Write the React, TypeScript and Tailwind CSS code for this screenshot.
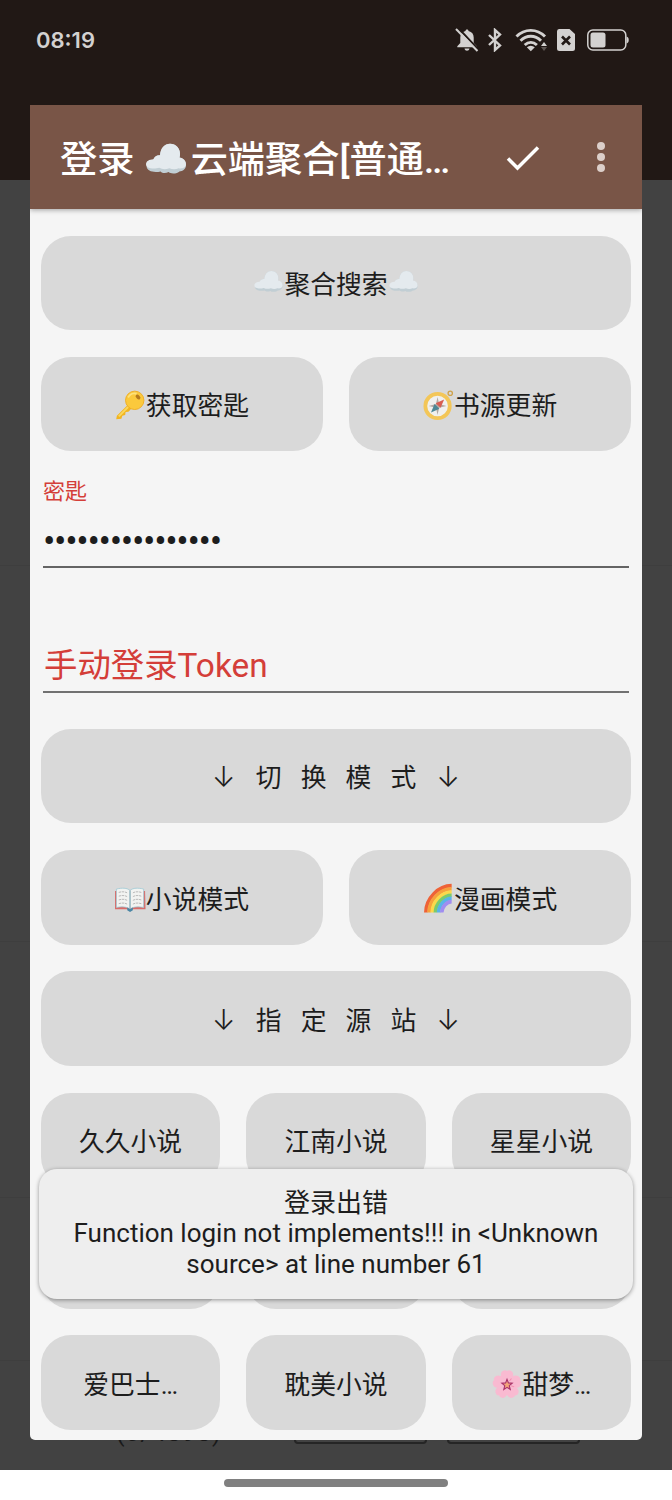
import type { ReactNode } from 'react'

type EmojiName = 'cloud' | 'key' | 'compass' | 'book' | 'rainbow' | 'blossom'

interface Action {
  label: ReactNode
  before?: EmojiName
  after?: EmojiName
}

const SOURCES: Action[] = [
  { label: '久久小说' },
  { label: '江南小说' },
  { label: '星星小说' },
  { label: '' },
  { label: '' },
  { label: '' },
  { label: '爱巴士…' },
  { label: '耽美小说' },
  { label: '甜梦…', before: 'blossom' },
]

const PETALS = [0, 72, 144, 216, 288]
const RAINBOW = ['#ee6237', '#f7a13c', '#fbd84b', '#7ccb6c', '#58b4e8', '#a08df0']

const DRAWINGS: Record<EmojiName, ReactNode> = {
  cloud: (
    <>
      <path d="M2 19c0-3 2.500-4.500 5-5 1-2.500 3-3.500 5-3.300C12.500 5 15.500 2 19.500 2 24 2 27 5.500 27 9.500c0 1 0 2-.4 3 3 .5 4.900 2.500 4.900 5.500 0 3-2.500 4.800-5 4.800-1 1.400-6 2.400-8 .5-2.500 1.200-5 .8-6-.5C8 24 2 23 2 19z" fill="#c1ced4" />
      <path d="M1.500 17.500c0-2.500 2.500-3.600 5.500-3.800 1-2.300 3-3.300 5-3C12.500 5 15.500 2 19.500 2 24 2 27 5.500 27 9.500c0 1-.1 2-.4 2.800 3 .5 4.900 2.200 4.900 5.200 0 2.500-3 3.500-5.500 3-2 1-5 .9-7 0-3 1-5.500.8-7.500-.4-3.500 1-10 1-10-2.600z" fill="#e4eaee" />
    </>
  ),
  key: (
    <>
      <path d="M13.500 16 2 27.500l-.7 3.700 5.500-.7 1-3 3-.8.500-3.300 3-.3 3.500-3.600z" fill="#f2b51f" />
      <path d="m4 28 11-11" stroke="#fbd75c" strokeWidth="2" />
      <circle cx="21" cy="11" r="9.800" fill="#fbc93c" stroke="#efad22" />
      <path d="M14 8c2-4 6-5 9-4" stroke="#fde17c" strokeWidth="2" fill="none" />
      <ellipse cx="24.500" cy="7.500" rx="3" ry="2" transform="rotate(45 24.500 7.500)" fill="#b57a1c" />
    </>
  ),
  compass: (
    <>
      <circle cx="29" cy="3.500" r="2.300" fill="none" stroke="#cfa24a" strokeWidth="1.400" />
      <circle cx="15.500" cy="17" r="13" fill="#f0f0ee" stroke="#f3c658" strokeWidth="4" />
      <path d="m15.500 7.500 1.700 7.500 7.800 2-7.800 2-1.700 7.500-1.700-7.500L6 17l7.800-2z" fill="#b3a9a3" />
      <path d="m22.500 10-3.800 9-5.200-5z" fill="#d85d51" />
      <path d="m8.500 24 3.800-9 5.200 5z" fill="#4d8795" />
    </>
  ),
  book: (
    <>
      <path d="M0 8.500h32l.5 19.500H18l-2 1.500-2-1.500H-.5z" fill="#d96c69" />
      <path d="M1.500 6.500C7 5 13 5 16 8c3-3 9-3 14.500-1.500v19.500C25 25 19 25 16 28c-3-3-9-3-14.500-2z" fill="#f2f3f1" stroke="#9ac8d4" strokeWidth=".8" />
      <path d="M16 8v20" stroke="#7fa8b5" strokeWidth="1.300" />
      <path d="M4 10c3-1 7-1 9.500.8M4 14c3-1 7-1 9.500.8M4 18c3-1 7-1 9.500.8M4 22c3-1 7-1 9.500.8M28 10c-3-1-7-1-9.500.8M28 14c-3-1-7-1-9.500.8M28 18c-3-1-7-1-9.500.8M28 22c-3-1-7-1-9.500.8" stroke="#b5b5b5" strokeWidth="1" strokeDasharray="2.500 .7" fill="none" />
      <path d="m13 26 3 2 3-2v3l-3 2-3-2z" fill="#4a86a5" />
    </>
  ),
  rainbow: (
    <>
      {RAINBOW.map((color, i) => {
        const r = 27.500 - i * 3.400
        return (
          <path
            key={color}
            d={`M${30.5 - r} 32C${30.5 - r} ${32 - r * 0.56} ${30.5 - r * 0.5} ${30.8 - r} 30.5 ${30.8 - r}`}
            transform="translate(0 -.5)"
            fill="none"
            stroke={color}
            strokeWidth="3.800"
          />
        )
      })}
    </>
  ),
  blossom: (
    <>
      {PETALS.map((a) => (
        <g key={a} transform={`rotate(${a} 16 16.500)`}>
          <path d="M16 17C9 12 8 5 11 2.500c2-1.700 4-1.500 5-.3 1-1.200 3-1.400 5 .3C24 5 23 12 16 17z" fill="#f9bad1" />
          <path d="M16 21V24.500" stroke="#f48fb1" />
        </g>
      ))}
      <path d="m16 11 1.500 3.800 4 .3-3.100 2.600 1 4-3.400-2.200-3.400 2.200 1-4-3.100-2.600 4-.3z" fill="#f3a679" stroke="#a8326a" strokeWidth="1.200" />
    </>
  ),
}

function Emoji({ name, className = 'w-[31px] h-[31px]' }: { name: EmojiName; className?: string }) {
  return (
    <svg viewBox="0 0 33 33" className={`shrink-0 ${className}`}>
      {DRAWINGS[name]}
    </svg>
  )
}

function ActionButton({ label, before, after }: Action) {
  return (
    <button className="flex h-[94.5px] min-w-0 flex-1 items-center justify-center whitespace-pre rounded-[30px] bg-[#d9d9d9] pt-[5px] text-[25.800px] text-[#1d1d1d] [word-spacing:12.700px]">
      {before && <Emoji name={before} className="mb-[2px] h-[31px] w-[31px]" />}
      <span>{label}</span>
      {after && <Emoji name={after} className="mb-[2px] h-[31px] w-[31px]" />}
    </button>
  )
}

function Row({ actions }: { actions: Action[] }) {
  return (
    <div className="flex gap-[26.300px]">
      {actions.map((action, i) => (
        <ActionButton key={i} {...action} />
      ))}
    </div>
  )
}

function Arrow() {
  return (
    <span className="inline-flex w-[25.800px] justify-center font-[Inter] text-[28px] font-light leading-none">↓</span>
  )
}

function SectionLabel({ text }: { text: string }) {
  return (
    <>
      <Arrow /> {text} <Arrow />
    </>
  )
}

function StatusBar() {
  return (
    <div className="flex h-[105px] items-start justify-between pl-9 pr-[43px] pt-[25px] text-[#d3d1d0]">
      <span className="font-[Inter] text-[22px] font-semibold leading-[30px]">08:19</span>
      <div className="flex h-[30px] items-center">
        {/* muted bell */}
        <svg width="24" height="24" viewBox="0 0 24 24" className="mr-[8px]">
          <path d="M12 1.500c1 0 1.500.7 1.500 1.500 3.500.8 5.200 3.300 5.200 6.500v5.500l3 3.200v1H2.300v-1l3-3.200V9.500c0-3.200 1.700-5.700 5.200-6.500 0-.8.500-1.500 1.500-1.500zM9.500 20.500h5c-.3 1.500-1.300 2.200-2.500 2.200s-2.200-.7-2.500-2.200z" fill="currentColor" />
          <path d="m2.800-.5 21.500 23" stroke="#211815" strokeWidth="2" />
          <path d="m1 1 21.500 22" stroke="currentColor" strokeWidth="2" />
        </svg>
        {/* bluetooth */}
        <svg width="16" height="24" viewBox="0 0 16 24" className="mr-[12px]">
          <path d="m2 7 11 10.500L8 22V2l5 4.500L2 17" fill="none" stroke="currentColor" strokeWidth="2.400" />
        </svg>
        {/* wifi */}
        <svg width="32" height="24" viewBox="0 0 32 24" className="mr-[9px]">
          <path d="M1.500 8.500c8-8.200 20.500-8.200 28.500 0M5.500 12.800c6-6 14.500-6 20.500 0M9.700 17c3.800-3.500 8.500-3.500 12.200 0" fill="none" stroke="currentColor" strokeWidth="2.900" />
          <path d="M11.800 19.200c2.500-2 5.500-2 8 0l-4 4z" fill="currentColor" />
          <path d="m29 14 3 4h-6z" fill="currentColor" />
          <path d="m29 23 3-4h-6z" fill="#5d5552" />
        </svg>
        {/* sim card without service */}
        <svg width="20" height="24" viewBox="0 0 20 24" className="mr-[11px]">
          <path d="M3 1h10.500L19 6v14.500a2.500 2.500 0 0 1-2.500 2.500h-13A2.500 2.500 0 0 1 1 20.500V3.500A2.500 2.500 0 0 1 3 1z" fill="currentColor" />
          <path d="m6 8.500 8 8m0-8-8 8" stroke="#211815" strokeWidth="2.600" />
        </svg>
        {/* battery */}
        <svg width="42" height="22" viewBox="0 0 42 22">
          <rect x=".8" y="1" width="38" height="20" rx="5" fill="none" stroke="currentColor" strokeWidth="1.500" />
          <rect x="3.500" y="3.500" width="15" height="15" rx="2.500" fill="currentColor" />
          <path d="M39.500 7.500c3 .5 3 6.500 0 7z" fill="currentColor" />
        </svg>
      </div>
    </div>
  )
}

/* Dimmed screen that stays visible around the dialog */
function Backdrop() {
  return (
    <div className="absolute inset-0 flex flex-col">
      <div className="h-[180px] bg-[#211815]" />
      <div className="flex h-[1290px] flex-col overflow-hidden bg-[#424242]">
        <div className="h-[386px] border-b border-[#3e3e3e]" />
        <div className="h-[376px] border-b border-[#3e3e3e]" />
        <div className="h-[256px] border-b border-[#3e3e3e]" />
        <div className="h-[163px] border-b border-[#3e3e3e]" />
        <div className="flex h-[83px] items-end pl-[116px] text-[#191919]">
          <span className="h-[26px] w-[178px] text-[25px] leading-[30px] tracking-[1px]">(0/4898)</span>
          <div className="mr-5 h-10 w-[133px] rounded-[4px] border-2 border-[#252525]" />
          <div className="h-10 w-[133px] rounded-[4px] border-2 border-[#252525]" />
        </div>
      </div>
      <div className="flex h-[30px] justify-center bg-white pt-[9px]">
        <div className="h-2 w-[224px] rounded-full bg-[#808080]" />
      </div>
    </div>
  )
}

function LoginDialog() {
  return (
    <section className="mx-[30px] flex h-[1335px] flex-col overflow-hidden rounded-b-[5px] bg-[#f5f5f5]">
      <header className="z-10 flex h-[104px] shrink-0 items-center bg-[#795547] pl-[30px] pr-9 text-white shadow-[0_1px_5px_rgba(0,0,0,0.35)]">
        <h1 className="flex items-center whitespace-pre pt-[8px] text-[37.200px] font-medium">
          <span>登录 </span>
          <Emoji name="cloud" className="mr-[3px] mt-[4px] h-[44px] w-[44px]" />
          <span>云端聚合[普通…</span>
        </h1>
        <svg width="34" height="28" viewBox="0 0 34 28" className="ml-auto mr-[56px] mt-[2px]">
          <path d="m2 14.500 9.500 9.500L32 3.500" fill="none" stroke="currentColor" strokeWidth="3.500" />
        </svg>
        <svg width="10" height="32" viewBox="0 0 10 32" fill="#dccfca">
          <circle cx="5" cy="5" r="4" />
          <circle cx="5" cy="16" r="4" />
          <circle cx="5" cy="27" r="4" />
        </svg>
      </header>

      <div className="flex flex-col gap-[26.800px] px-[11px] pt-[26.500px]">
        <Row actions={[{ label: '聚合搜索', before: 'cloud', after: 'cloud' }]} />
        <Row actions={[{ label: '获取密匙', before: 'key' }, { label: '书源更新', before: 'compass' }]} />

        <div className="mx-[2px] flex h-[224px] flex-col">
          <div className="h-[90px] border-b-2 border-[#646464]">
            <div className="pt-px text-[22px] leading-[26px] text-[#d43e39]">密匙</div>
            <div className="pt-[17px] text-[37px] leading-[40px] tracking-[-1.370px] text-[#1d1d1d]">••••••••••••••••</div>
          </div>
          <div className="flex h-[125px] items-end border-b-2 border-[#717171] pb-[2px] pl-px text-[33.400px] leading-[46px] text-[#d43e39]">
            手动登录Token
          </div>
        </div>

        <Row actions={[{ label: <SectionLabel text="切 换 模 式" /> }]} />
        <Row actions={[{ label: '小说模式', before: 'book' }, { label: '漫画模式', before: 'rainbow' }]} />
        <Row actions={[{ label: <SectionLabel text="指 定 源 站" /> }]} />
        <Row actions={SOURCES.slice(0, 3)} />
        <Row actions={SOURCES.slice(3, 6)} />
        <Row actions={SOURCES.slice(6)} />
      </div>
    </section>
  )
}

function Toast() {
  return (
    <div className="absolute left-[39px] top-[1169px] h-[130px] w-[594px] rounded-[18px] bg-[#eee] pt-[19px] text-center text-[26px] leading-[30.300px] text-[#1d1d1d] shadow-[0_1px_4px_rgba(0,0,0,0.4)]">
      <p>登录出错</p>
      <p>Function login not implements!!! in &lt;Unknown</p>
      <p>source&gt; at line number 61</p>
    </div>
  )
}

export default function App() {
  return (
    <div className="relative h-[1500px] w-[672px] overflow-hidden font-[Roboto,'Noto_Sans_CJK_SC',sans-serif]">
      <Backdrop />
      <div className="relative">
        <StatusBar />
        <LoginDialog />
      </div>
      <Toast />
    </div>
  )
}
